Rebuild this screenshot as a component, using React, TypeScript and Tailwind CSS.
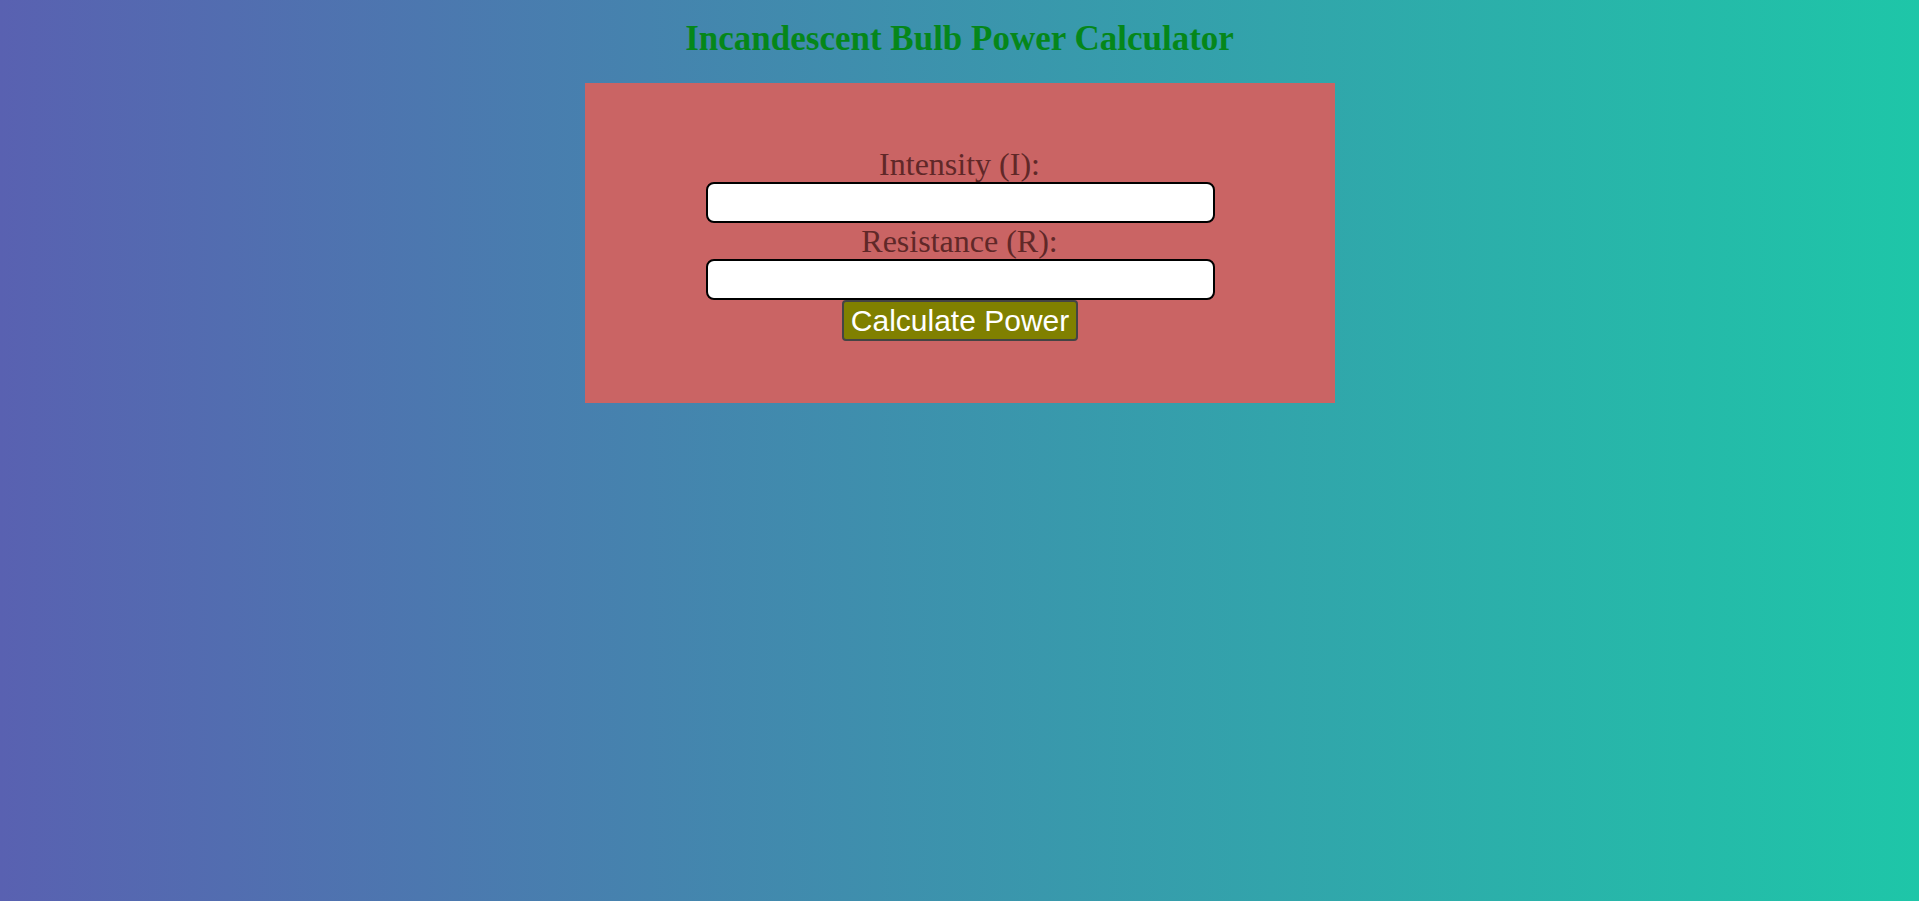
export default function App() {
  return (
    <div className="min-h-[901px] w-full bg-[linear-gradient(to_right,#5961b1,#1ec6a8)] flex flex-col items-center font-['Liberation_Serif',serif]">
      <h1 className="mt-[19px] text-[35px] leading-[40px] font-bold text-[#05871a]">
        Incandescent Bulb Power Calculator
      </h1>
      <div className="mt-[24px] w-[750px] h-[320px] bg-[#ca6464] flex flex-col items-center pt-[63px]">
        <label className="text-[32px] leading-[36px] text-[#602828]">Intensity (I):</label>
        <input
          type="text"
          className="ml-[2px] w-[509px] h-[41px] bg-white border-2 border-black rounded-[8px] px-1 text-[20px] outline-none"
        />
        <label className="text-[32px] leading-[36px] text-[#602828]">Resistance (R):</label>
        <input
          type="text"
          className="ml-[2px] w-[509px] h-[41px] bg-white border-2 border-black rounded-[8px] px-1 text-[20px] outline-none"
        />
        <button className="ml-[1px] h-[41px] px-[7px] bg-[#808000] border-2 border-[#444] rounded-[4px] text-white text-[30px] leading-[34px] font-['Liberation_Sans',Arial,sans-serif]">
          Calculate Power
        </button>
      </div>
    </div>
  );
}
